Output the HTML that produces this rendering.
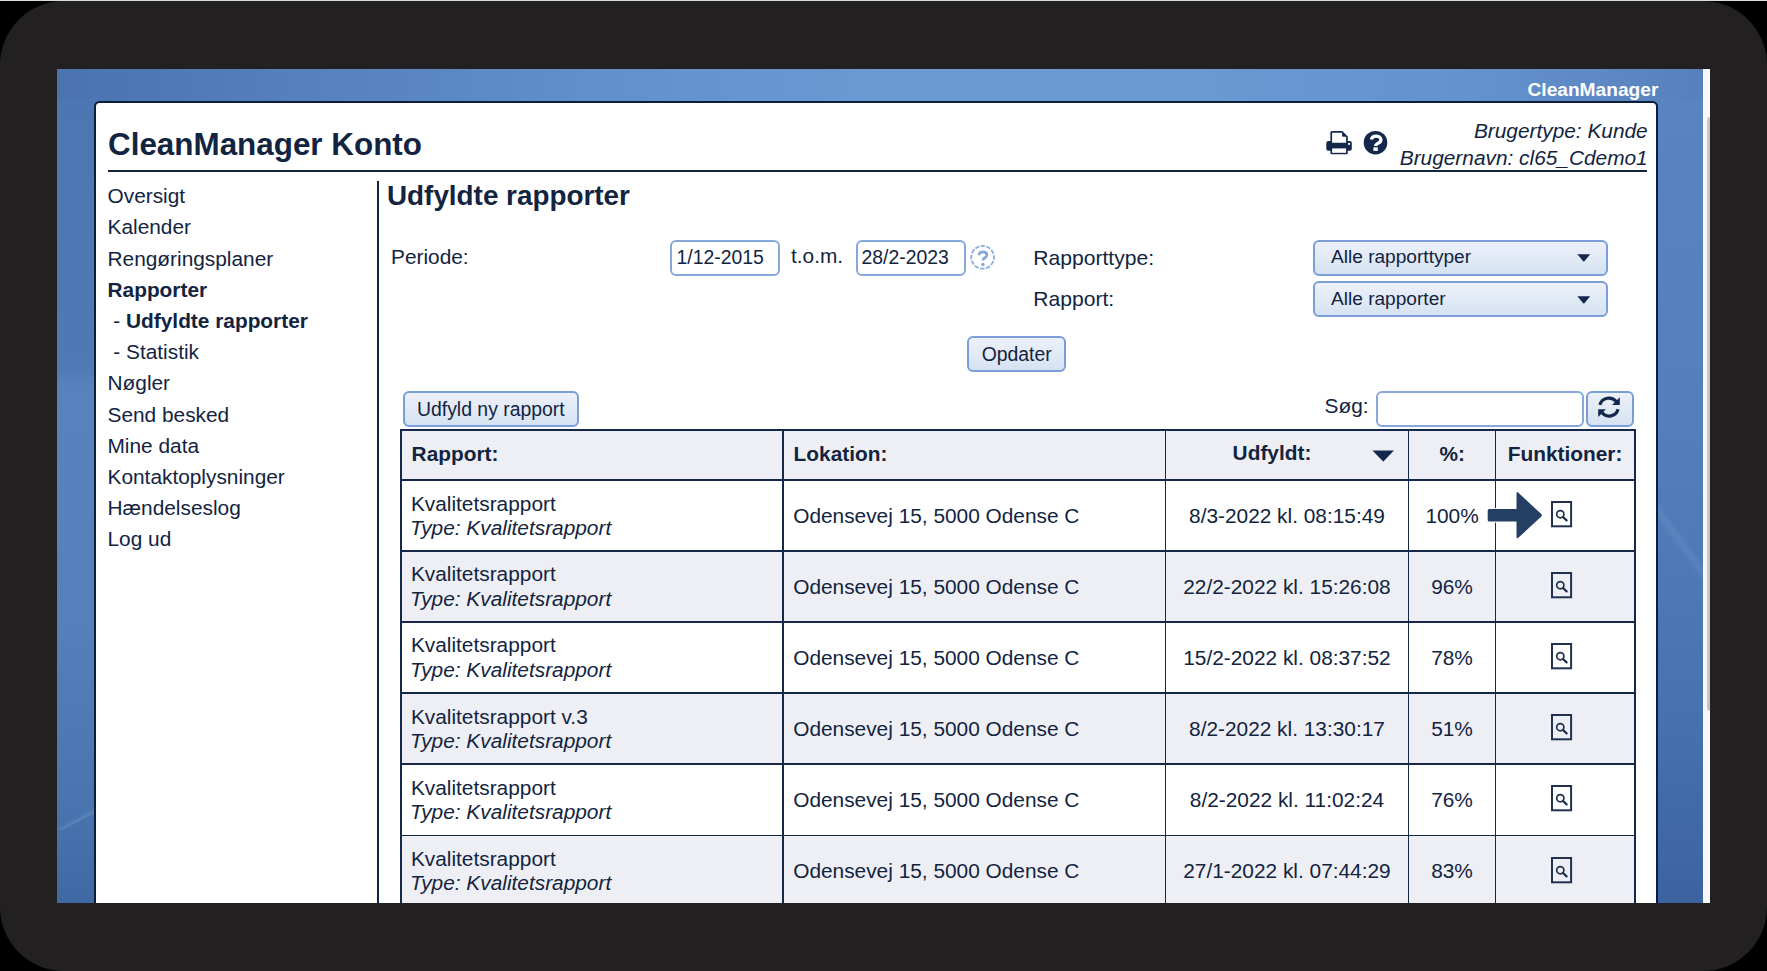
<!DOCTYPE html>
<html><head><meta charset="utf-8">
<style>
*{margin:0;padding:0;box-sizing:border-box}
html,body{width:1767px;height:971px;overflow:hidden;background:#000;font-family:"Liberation Sans",sans-serif;color:#12243f}
#topline{position:absolute;left:0;top:0;width:1767px;height:1px;background:#dcdcdc}
#frame{position:absolute;left:0;top:1px;width:1767px;height:970px;background:#222021;border-radius:64px}
#screen{position:absolute;left:57px;top:69px;width:1653px;height:834px;overflow:hidden;background:#4e79b5}
#bgtop{left:0;top:0;width:1653px;height:40px;background:linear-gradient(90deg,#4a73af 0%,#5581bd 15%,#6190cb 33%,#6b9ad3 51%,#6a99d2 69%,#6391cc 87%,#5680bb 100%)}
#bgleft{left:0;top:30px;width:40px;height:804px;background:linear-gradient(180deg,#4d77b3 0%,#4f79b5 33%,#5682be 36%,#5481bc 65%,#4874b0 88%,#3f69a5 100%)}
#bgright{left:1598px;top:30px;width:55px;height:804px;background:linear-gradient(180deg,#5884c0 0%,#5380bc 40%,#4b77b4 65%,#4470ad 80%,#3c63a0 100%)}
#streak1{left:0;top:731px;width:60px;height:30px;background:linear-gradient(-28deg,rgba(255,255,255,0) 45%,rgba(255,255,255,0.13) 49%,rgba(255,255,255,0.03) 53%,rgba(0,0,0,0) 60%)}
#streak2{left:1598px;top:411px;width:48px;height:120px;background:linear-gradient(54deg,rgba(255,255,255,0) 44%,rgba(255,255,255,0.07) 50%,rgba(255,255,255,0) 56%)}
#w{position:absolute;left:-57px;top:-69px;width:1767px;height:971px}
#w>div,#w>svg{position:absolute}
.t{white-space:nowrap;line-height:1}
.b,b{font-weight:bold}
.i{font-style:italic}
.c{text-align:center}
#sb{left:1703px;top:69px;width:7px;height:834px;background:#f8f8f8}
#thumb{left:1706.5px;top:117px;width:3.5px;height:594px;background:#c6c6c6;border-radius:3px 0 0 3px}
#panel{left:94.3px;top:100.6px;width:1563.7px;height:900px;background:#fff;border:2px solid #0d1e3c;border-radius:5.5px}
.hl{background:#12243f}
.tl{background:#15284a}
.inp{border:2px solid #85a7dc;border-radius:6px;background:#fff}
.btn{border:2px solid #7a9ed8;border-radius:6px;background:linear-gradient(#edf1f9,#d6e2f2)}
.g{background:#eeeff5}
</style></head><body>
<div id="topline"></div>
<div id="frame"></div>
<div id="screen"><div id="bgtop" style="position:absolute"></div><div id="bgleft" style="position:absolute"></div><div id="bgright" style="position:absolute"></div><div id="streak1" style="position:absolute"></div><div id="streak2" style="position:absolute"></div><div id="w">
 <div id="sb"></div><div id="thumb"></div>
 <div id="panel"></div>
 <div class="t b" style="left:1527.5px;top:79.59px;font-size:19.15px;color:#fff">CleanManager</div>
 <div class="t b" style="left:108px;top:128.92px;font-size:31.4px;">CleanManager Konto</div>
 <div class="t i" style="right:119.3px;top:121.35px;font-size:20.85px">Brugertype: Kunde</div>
 <div class="t i" style="right:119.3px;top:147.55px;font-size:20.85px">Brugernavn: cl65_Cdemo1</div>
 <div class="hl" style="left:108px;top:170px;width:1539px;height:2px"></div>
 <svg style="position:absolute;left:1320px;top:125px" width="75" height="35" viewBox="0 0 75 35">
  <rect x="6.3" y="16.1" width="25.5" height="9.6" rx="2" fill="#13284a"/>
  <path d="M10.4 7.5 Q10.4 5.9 12 5.9 H22.3 L27.8 11.4 V18 H10.4 Z" fill="#13284a"/>
  <path d="M12.1 7.7 H22.1 V10.4 Q22.1 11.7 23.4 11.7 H26.1 V17.8 H12.1 Z" fill="#fff"/>
  <rect x="10.4" y="22.3" width="17.4" height="7" rx="1.2" fill="#13284a"/>
  <rect x="12.1" y="23.4" width="14" height="4.4" fill="#fff"/>
  <rect x="28.1" y="17.9" width="2" height="1.9" fill="#fff"/>
  <circle cx="55.5" cy="17.7" r="11.8" fill="#13284a"/>
  <path d="M51.4 14.6 C51.8 12.2 53.6 11.1 56 11.1 C58.7 11.1 60.9 12.6 60.9 14.9 C60.9 17 58.9 17.7 57.5 18.6 C56.1 19.4 55.6 19.9 55.6 20.9" fill="none" stroke="#fff" stroke-width="3.3"/>
  <rect x="53.4" y="22.3" width="4.4" height="3.6" fill="#fff"/>
 </svg>
 <div class="t " style="left:107.5px;top:186.25px;font-size:20.85px;">Oversigt</div>
 <div class="t " style="left:107.5px;top:217.45px;font-size:20.85px;">Kalender</div>
 <div class="t " style="left:107.5px;top:248.65px;font-size:20.85px;">Rengøringsplaner</div>
 <div class="t " style="left:107.5px;top:279.85px;font-size:20.85px;"><b>Rapporter</b></div>
 <div class="t " style="left:107.5px;top:311.05px;font-size:20.85px;">&nbsp;- <b>Udfyldte rapporter</b></div>
 <div class="t " style="left:107.5px;top:342.25px;font-size:20.85px;">&nbsp;- Statistik</div>
 <div class="t " style="left:107.5px;top:373.45px;font-size:20.85px;">Nøgler</div>
 <div class="t " style="left:107.5px;top:404.65px;font-size:20.85px;">Send besked</div>
 <div class="t " style="left:107.5px;top:435.85px;font-size:20.85px;">Mine data</div>
 <div class="t " style="left:107.5px;top:467.05px;font-size:20.85px;">Kontaktoplysninger</div>
 <div class="t " style="left:107.5px;top:498.25px;font-size:20.85px;">Hændelseslog</div>
 <div class="t " style="left:107.5px;top:529.45px;font-size:20.85px;">Log ud</div>
 <div class="hl" style="left:377.3px;top:180.5px;width:1.7px;height:740px"></div>
 <div class="t b" style="left:387px;top:182.42px;font-size:27.85px;">Udfyldte rapporter</div>
 <div class="t " style="left:391px;top:247.15px;font-size:20.85px;">Periode:</div>
 <div class="inp" style="left:670px;top:239.5px;width:109.5px;height:36px"></div>
 <div class="t " style="left:676.5px;top:248.18px;font-size:19.4px;">1/12-2015</div>
 <div class="t " style="left:791px;top:246.35px;font-size:20.85px;">t.o.m.</div>
 <div class="inp" style="left:856px;top:239.5px;width:109.5px;height:36px"></div>
 <div class="t " style="left:861.5px;top:248.18px;font-size:19.4px;">28/2-2023</div>
 <svg style="position:absolute;left:970px;top:245px" width="26" height="26" viewBox="0 0 26 26">
  <circle cx="12.6" cy="12.3" r="11.4" fill="none" stroke="#8aacdf" stroke-width="1.8" stroke-dasharray="4.5 1.47" stroke-dashoffset="2.25" transform="rotate(-90 12.6 12.3)"/>
  <path d="M9.1 10.2 C9.1 7.9 10.8 6.9 12.9 6.9 C15.3 6.9 16.9 8.2 16.9 10.1 C16.9 12 15.1 12.7 14 13.5 C13.2 14.1 13 14.6 13 15.6" fill="none" stroke="#86a8dc" stroke-width="2.8"/>
  <circle cx="12.9" cy="19.5" r="1.7" fill="#86a8dc"/>
 </svg>
 <div class="t " style="left:1033.3px;top:246.64px;font-size:21.1px;">Rapporttype:</div>
 <div class="t " style="left:1033.3px;top:287.84px;font-size:21.1px;">Rapport:</div>
 <div class="btn" style="left:1312.5px;top:240px;width:295.5px;height:35.5px"></div>
 <div class="t " style="left:1331px;top:247.43px;font-size:19.1px;">Alle rapporttyper</div>
 <svg style="position:absolute;left:1577px;top:254px" width="14" height="8" viewBox="0 0 14 8"><path d="M0.4 0.3 H13.2 L7.4 7.2 Q6.8 7.8 6.2 7.2 Z" fill="#13284a"/></svg>
 <div class="btn" style="left:1312.5px;top:281.3px;width:295.5px;height:35.5px"></div>
 <div class="t " style="left:1331px;top:288.63px;font-size:19.1px;">Alle rapporter</div>
 <svg style="position:absolute;left:1577px;top:295.6px" width="14" height="8" viewBox="0 0 14 8"><path d="M0.4 0.3 H13.2 L7.4 7.2 Q6.8 7.8 6.2 7.2 Z" fill="#13284a"/></svg>
 <div class="btn" style="left:966.5px;top:336px;width:99.5px;height:36px"></div>
 <div class="t " style="left:981.7px;top:344.58px;font-size:19.4px;">Opdater</div>
 <div class="btn" style="left:402.5px;top:391px;width:176.5px;height:36px"></div>
 <div class="t " style="left:417px;top:400.38px;font-size:19.4px;">Udfyld ny rapport</div>
 <div class="t " style="left:1324.6px;top:396.35px;font-size:20.85px;">Søg:</div>
 <div class="inp" style="left:1376px;top:391.3px;width:208px;height:35.8px"></div>
 <div class="btn" style="left:1586px;top:391.3px;width:48.3px;height:35.8px"></div>
 <svg style="position:absolute;left:1598px;top:396px" width="22" height="22" viewBox="0 0 22 22">
  <path d="M1.9 8.9 A9.4 9.4 0 0 1 18.2 5.6" fill="none" stroke="#13284a" stroke-width="3.1"/>
  <path d="M21.8 1.2 V9 H14.1 Z" fill="#13284a"/>
  <path d="M20.1 13.3 A9.4 9.4 0 0 1 3.8 16.6" fill="none" stroke="#13284a" stroke-width="3.1"/>
  <path d="M0.2 21 V13.2 H7.9 Z" fill="#13284a"/>
 </svg>
 <div class="g" style="left:401px;top:430.1px;width:1234px;height:50.1px"></div>
 <div class="g" style="left:401px;top:551.0px;width:1234px;height:71.0px"></div>
 <div class="g" style="left:401px;top:693.3px;width:1234px;height:71.0px"></div>
 <div class="g" style="left:401px;top:835.5px;width:1234px;height:71.1px"></div>
 <div class="hl tl" style="left:400.35px;top:429px;width:1.7px;height:480px"></div>
 <div class="hl tl" style="left:781.85px;top:429px;width:1.7px;height:480px"></div>
 <div class="hl tl" style="left:1164.55px;top:429px;width:1.7px;height:480px"></div>
 <div class="hl tl" style="left:1407.75px;top:429px;width:1.7px;height:480px"></div>
 <div class="hl tl" style="left:1494.65px;top:429px;width:1.7px;height:480px"></div>
 <div class="hl tl" style="left:1634.05px;top:429px;width:1.7px;height:480px"></div>
 <div class="hl tl" style="left:400.3px;top:429.20px;width:1235.5px;height:1.8px"></div>
 <div class="hl tl" style="left:400.3px;top:479.30px;width:1235.5px;height:1.8px"></div>
 <div class="hl tl" style="left:400.3px;top:550.10px;width:1235.5px;height:1.8px"></div>
 <div class="hl tl" style="left:400.3px;top:621.10px;width:1235.5px;height:1.8px"></div>
 <div class="hl tl" style="left:400.3px;top:692.40px;width:1235.5px;height:1.8px"></div>
 <div class="hl tl" style="left:400.3px;top:763.40px;width:1235.5px;height:1.8px"></div>
 <div class="hl tl" style="left:400.3px;top:834.60px;width:1235.5px;height:1.8px"></div>
 <div class="t b" style="left:411.6px;top:443.85px;font-size:20.85px;">Rapport:</div>
 <div class="t b" style="left:793.6px;top:443.85px;font-size:20.85px;">Lokation:</div>
 <div class="t b" style="left:1232.6px;top:443.45px;font-size:20.85px;">Udfyldt:</div>
 <svg style="position:absolute;left:1372px;top:450px" width="23" height="12" viewBox="0 0 23 12"><path d="M0.5 0.4 H22 L11.6 11.3 Q11.25 11.7 10.9 11.3 Z" fill="#13284a"/></svg>
 <div class="t b" style="left:1439.5px;top:443.95px;font-size:20.85px;">%:</div>
 <div class="t b" style="left:1507.8px;top:443.95px;font-size:20.85px;">Funktioner:</div>
 <div class="t " style="left:410.9px;top:493.65px;font-size:20.85px;">Kvalitetsrapport</div>
 <div class="t i" style="left:410.0px;top:517.95px;font-size:20.85px;">Type: Kvalitetsrapport</div>
 <div class="t " style="left:793.2px;top:505.95px;font-size:20.85px;">Odensevej 15, 5000 Odense C</div>
 <div class="t c" style="left:1165.4px;width:243.2px;top:505.95px;font-size:20.85px">8/3-2022 kl. 08:15:49</div>
 <div class="t c" style="left:1408.6px;width:86.9px;top:505.95px;font-size:20.85px">100%</div>
 <svg style="position:absolute;left:1550px;top:500.2px" width="23" height="28" viewBox="0 0 23 28">
  <rect x="2" y="2" width="19.1" height="24.3" fill="none" stroke="#22324e" stroke-width="2"/>
  <circle cx="10.3" cy="14.2" r="3.6" fill="none" stroke="#22324e" stroke-width="1.7"/>
  <path d="M13 17 L16.6 20.4" stroke="#1d2c46" stroke-width="2.2" stroke-linecap="round"/>
 </svg>
 <div class="t " style="left:410.9px;top:564.45px;font-size:20.85px;">Kvalitetsrapport</div>
 <div class="t i" style="left:410.0px;top:588.75px;font-size:20.85px;">Type: Kvalitetsrapport</div>
 <div class="t " style="left:793.2px;top:576.75px;font-size:20.85px;">Odensevej 15, 5000 Odense C</div>
 <div class="t c" style="left:1165.4px;width:243.2px;top:576.75px;font-size:20.85px">22/2-2022 kl. 15:26:08</div>
 <div class="t c" style="left:1408.6px;width:86.9px;top:576.75px;font-size:20.85px">96%</div>
 <svg style="position:absolute;left:1550px;top:571.0px" width="23" height="28" viewBox="0 0 23 28">
  <rect x="2" y="2" width="19.1" height="24.3" fill="none" stroke="#22324e" stroke-width="2"/>
  <circle cx="10.3" cy="14.2" r="3.6" fill="none" stroke="#22324e" stroke-width="1.7"/>
  <path d="M13 17 L16.6 20.4" stroke="#1d2c46" stroke-width="2.2" stroke-linecap="round"/>
 </svg>
 <div class="t " style="left:410.9px;top:635.45px;font-size:20.85px;">Kvalitetsrapport</div>
 <div class="t i" style="left:410.0px;top:659.75px;font-size:20.85px;">Type: Kvalitetsrapport</div>
 <div class="t " style="left:793.2px;top:647.75px;font-size:20.85px;">Odensevej 15, 5000 Odense C</div>
 <div class="t c" style="left:1165.4px;width:243.2px;top:647.75px;font-size:20.85px">15/2-2022 kl. 08:37:52</div>
 <div class="t c" style="left:1408.6px;width:86.9px;top:647.75px;font-size:20.85px">78%</div>
 <svg style="position:absolute;left:1550px;top:642.0px" width="23" height="28" viewBox="0 0 23 28">
  <rect x="2" y="2" width="19.1" height="24.3" fill="none" stroke="#22324e" stroke-width="2"/>
  <circle cx="10.3" cy="14.2" r="3.6" fill="none" stroke="#22324e" stroke-width="1.7"/>
  <path d="M13 17 L16.6 20.4" stroke="#1d2c46" stroke-width="2.2" stroke-linecap="round"/>
 </svg>
 <div class="t " style="left:410.9px;top:706.75px;font-size:20.85px;">Kvalitetsrapport v.3</div>
 <div class="t i" style="left:410.0px;top:731.05px;font-size:20.85px;">Type: Kvalitetsrapport</div>
 <div class="t " style="left:793.2px;top:719.05px;font-size:20.85px;">Odensevej 15, 5000 Odense C</div>
 <div class="t c" style="left:1165.4px;width:243.2px;top:719.05px;font-size:20.85px">8/2-2022 kl. 13:30:17</div>
 <div class="t c" style="left:1408.6px;width:86.9px;top:719.05px;font-size:20.85px">51%</div>
 <svg style="position:absolute;left:1550px;top:713.3px" width="23" height="28" viewBox="0 0 23 28">
  <rect x="2" y="2" width="19.1" height="24.3" fill="none" stroke="#22324e" stroke-width="2"/>
  <circle cx="10.3" cy="14.2" r="3.6" fill="none" stroke="#22324e" stroke-width="1.7"/>
  <path d="M13 17 L16.6 20.4" stroke="#1d2c46" stroke-width="2.2" stroke-linecap="round"/>
 </svg>
 <div class="t " style="left:410.9px;top:777.75px;font-size:20.85px;">Kvalitetsrapport</div>
 <div class="t i" style="left:410.0px;top:802.05px;font-size:20.85px;">Type: Kvalitetsrapport</div>
 <div class="t " style="left:793.2px;top:790.05px;font-size:20.85px;">Odensevej 15, 5000 Odense C</div>
 <div class="t c" style="left:1165.4px;width:243.2px;top:790.05px;font-size:20.85px">8/2-2022 kl. 11:02:24</div>
 <div class="t c" style="left:1408.6px;width:86.9px;top:790.05px;font-size:20.85px">76%</div>
 <svg style="position:absolute;left:1550px;top:784.3px" width="23" height="28" viewBox="0 0 23 28">
  <rect x="2" y="2" width="19.1" height="24.3" fill="none" stroke="#22324e" stroke-width="2"/>
  <circle cx="10.3" cy="14.2" r="3.6" fill="none" stroke="#22324e" stroke-width="1.7"/>
  <path d="M13 17 L16.6 20.4" stroke="#1d2c46" stroke-width="2.2" stroke-linecap="round"/>
 </svg>
 <div class="t " style="left:410.9px;top:848.95px;font-size:20.85px;">Kvalitetsrapport</div>
 <div class="t i" style="left:410.0px;top:873.25px;font-size:20.85px;">Type: Kvalitetsrapport</div>
 <div class="t " style="left:793.2px;top:861.25px;font-size:20.85px;">Odensevej 15, 5000 Odense C</div>
 <div class="t c" style="left:1165.4px;width:243.2px;top:861.25px;font-size:20.85px">27/1-2022 kl. 07:44:29</div>
 <div class="t c" style="left:1408.6px;width:86.9px;top:861.25px;font-size:20.85px">83%</div>
 <svg style="position:absolute;left:1550px;top:855.5px" width="23" height="28" viewBox="0 0 23 28">
  <rect x="2" y="2" width="19.1" height="24.3" fill="none" stroke="#22324e" stroke-width="2"/>
  <circle cx="10.3" cy="14.2" r="3.6" fill="none" stroke="#22324e" stroke-width="1.7"/>
  <path d="M13 17 L16.6 20.4" stroke="#1d2c46" stroke-width="2.2" stroke-linecap="round"/>
 </svg>
 <svg style="position:absolute;left:1484px;top:488px" width="62" height="55" viewBox="0 0 62 55">
  <path d="M5.2 21.1 Q3.7 21.1 3.7 22.6 V32.1 Q3.7 33.6 5.2 33.6 H32.5 V48.8 Q32.5 51.5 34.6 49.6 L57.3 28.6 Q58.4 27.3 57.3 26.1 L34.6 4.9 Q32.5 3 32.5 5.7 V21.1 Z" fill="#253e63" stroke="#fff" stroke-width="2.2" paint-order="stroke"/>
 </svg>
</div></div>
</body></html>
